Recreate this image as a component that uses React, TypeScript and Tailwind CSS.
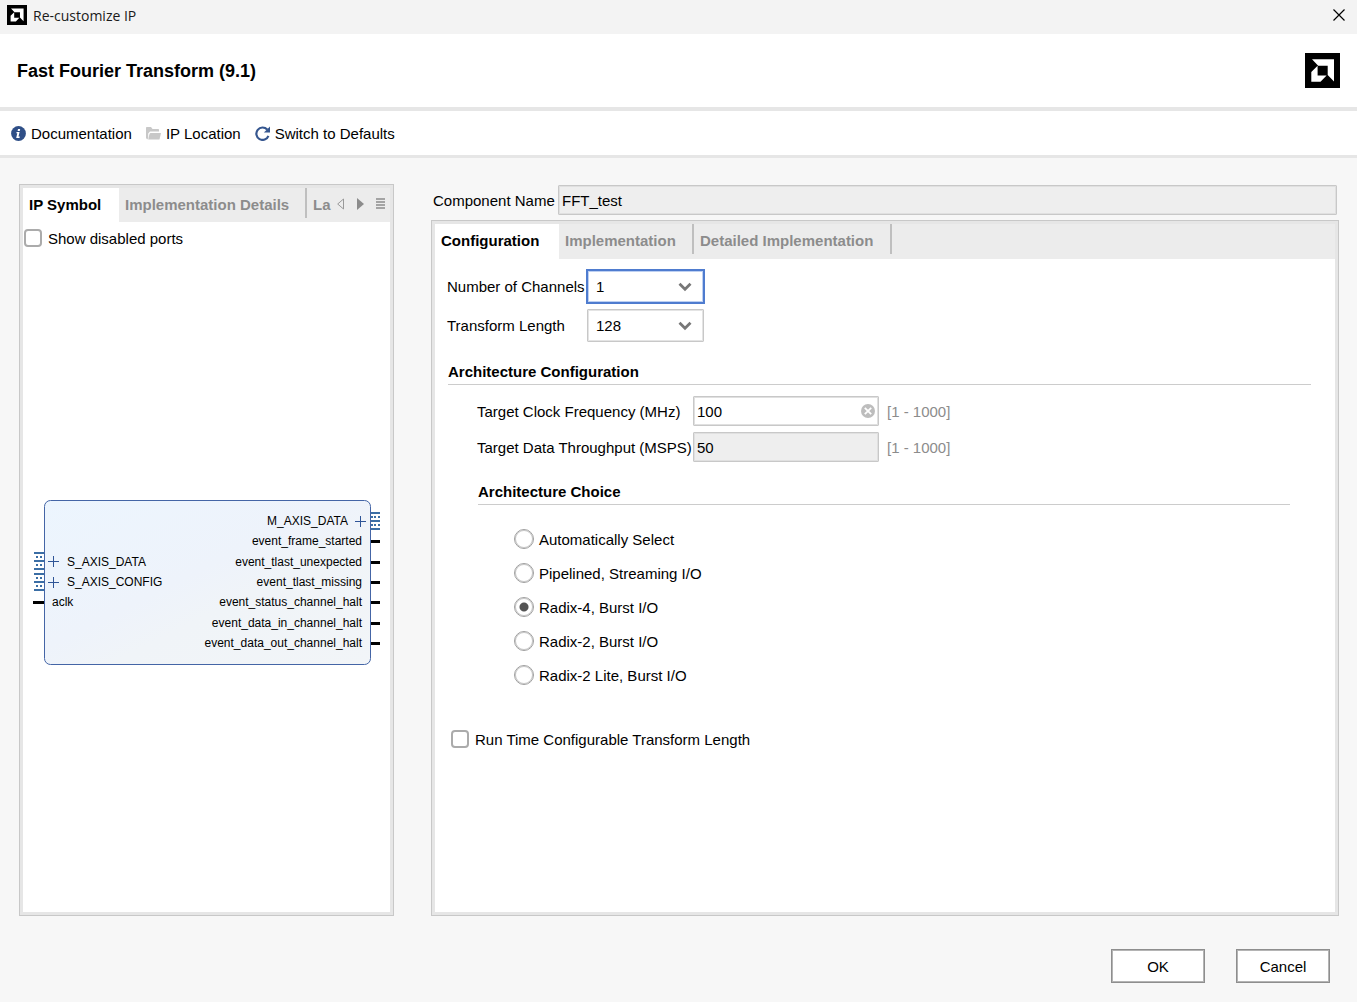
import React, { useState } from "react";

const ARCHITECTURES = [
    "Automatically Select",
    "Pipelined, Streaming I/O",
    "Radix-4, Burst I/O",
    "Radix-2, Burst I/O",
    "Radix-2 Lite, Burst I/O",
];

// Event outputs of the block, y is the top of the port stub
const EVENT_PORTS = [
    { name: "event_frame_started", y: 40 },
    { name: "event_tlast_unexpected", y: 61 },
    { name: "event_tlast_missing", y: 81 },
    { name: "event_status_channel_halt", y: 101 },
    { name: "event_data_in_channel_halt", y: 122 },
    { name: "event_data_out_channel_halt", y: 142 },
];

const Logo: React.FC<{ className: string }> = ({ className }) => (
    <svg viewBox="0 0 35 35" className={className} aria-hidden="true">
        <rect width="35" height="35" fill="#000" />
        <path d="M7 6.3H29V28.5L22.7 22V12.7H13.2Z" fill="#fff" />
        <path d="M6.3 19L12.6 12.8V22.4H21.6L15.5 28.7H6.3Z" fill="#fff" />
    </svg>
);

const BusPort: React.FC<{ x: number; y: number; width: number; dots: number[] }> = ({ x, y, width, dots }) => (
    <g fill="#3b6ea5" shapeRendering="crispEdges">
        <rect x={x} y={y} width={width} height="2" />
        <rect x={x} y={y + 8} width={width} height="2" />
        <rect x={x} y={y + 16} width={width} height="2" />
        {dots.map((dot) => (
            <g key={dot}>
                <rect x={x + dot} y={y + 4} width="2" height="2" />
                <rect x={x + dot} y={y + 12} width="2" height="2" />
            </g>
        ))}
    </g>
);

const Plus: React.FC<{ x: number; y: number }> = ({ x, y }) => (
    <path d={`M${x - 5.5} ${y}h11M${x} ${y - 5.5}v11`} stroke="#2f5597" fill="none" />
);

const IpSymbol: React.FC = () => (
    <svg
        width="348"
        height="165"
        viewBox="0 0 348 165"
        className="font-['Liberation_Sans',sans-serif] text-xs"
        fill="#000"
    >
        <defs>
            <linearGradient id="block" x1="0" y1="0" x2="1" y2="1">
                <stop offset="0" stopColor="#ecf5fe" />
                <stop offset="0.45" stopColor="#eef3fb" />
                <stop offset="0.6" stopColor="#f0f4f8" />
                <stop offset="1" stopColor="#f2f5f8" />
            </linearGradient>
        </defs>
        <rect x="11.5" y="0.5" width="326" height="164" rx="6" fill="url(#block)" stroke="#4465a6" />

        {/* Inputs */}
        <BusPort x={1} y={52} width={10} dots={[2, 6]} />
        <BusPort x={1} y={73} width={10} dots={[2, 6]} />
        <Plus x={20.5} y={61.5} />
        <Plus x={20.5} y={82.5} />
        <text x="34" y="66">S_AXIS_DATA</text>
        <text x="34" y="86">S_AXIS_CONFIG</text>
        <rect x="0" y="101" width="11" height="3" />
        <text x="19" y="106">aclk</text>

        {/* Outputs */}
        <text x="315" y="25" textAnchor="end">M_AXIS_DATA</text>
        <Plus x={327.5} y={21.5} />
        <BusPort x={338} y={12} width={9} dots={[0, 3, 7]} />
        {EVENT_PORTS.map((port) => (
            <g key={port.name}>
                <text x="329" y={port.y + 5} textAnchor="end">{port.name}</text>
                <rect x="338" y={port.y} width="9" height="3" />
            </g>
        ))}
    </svg>
);

const SectionTitle: React.FC<{ children: React.ReactNode }> = ({ children }) => (
    <h2 className="mt-[19px] ml-px border-b border-[#cccccc] pb-[2px] font-bold">{children}</h2>
);

const Tab: React.FC<{ label: string; active?: boolean; className?: string }> = ({ label, active, className }) => (
    <button
        type="button"
        role="tab"
        aria-selected={!!active}
        className={`h-full pb-px pl-1.5 text-left leading-5 font-bold whitespace-nowrap ${
            active ? "bg-white text-black" : "text-[#8c8c8c]"
        } ${className ?? ""}`}
    >
        {label}
    </button>
);

const TabDivider: React.FC = () => <span className="h-[30px] w-[2px] shrink-0 bg-[#bfbfbf]" />;

const SelectField: React.FC<{ id: string; label: string; options: string[]; focused?: boolean }> = ({
    id,
    label,
    options,
    focused,
}) => {
    const [value, setValue] = useState(options[0]);

    return (
        <div className="flex items-center">
            <label htmlFor={id} className="w-[140px]">{label}</label>
            <div className="relative">
                <select
                    id={id}
                    value={value}
                    onChange={(e) => setValue(e.target.value)}
                    className={`block h-[33px] w-[117px] appearance-none border bg-white pl-2 outline-none ${
                        focused
                            ? "border-[#4f7ccf] ring-1 ring-[#4f7ccf] inset-ring inset-ring-[#bdd0f2]"
                            : "rounded-[1px] border-[#c8c8c8] inset-ring inset-ring-[#e4e4e4]"
                    }`}
                >
                    {options.map((option) => (
                        <option key={option}>{option}</option>
                    ))}
                </select>
                <svg
                    viewBox="0 0 14 10"
                    className="pointer-events-none absolute top-3 right-3 h-[10px] w-[14px]"
                    aria-hidden="true"
                >
                    <path d="M1.5 1.8L7 7.2L12.5 1.8" fill="none" stroke="#777" strokeWidth="2.8" />
                </svg>
            </div>
        </div>
    );
};

const checkboxClass = "size-[18px] shrink-0 appearance-none rounded-[4px] border-2 border-[#ababab] bg-white checked:bg-[#555]";
const inputClass = "h-[30px] rounded-[1px] border border-[#c8c8c8] inset-ring inset-ring-[#e0e0e0] pl-[3px] outline-none";
const buttonClass = "h-[34px] w-[94px] border border-[#8e8e8e] bg-white inset-ring inset-ring-[#b4b4b4]";

export default function App() {
    const [frequency, setFrequency] = useState("100");
    const [architecture, setArchitecture] = useState("Radix-4, Burst I/O");

    return (
        <div className="flex min-h-screen flex-col bg-[#f7f7f7] font-['Liberation_Sans',Arial,sans-serif] text-[15px] leading-[21px] text-black">
            {/* Title bar */}
            <div className="flex h-[34px] items-center bg-[#f3f3f3] pr-3 pb-1 pl-[7px]">
                <Logo className="size-5" />
                <span className="ml-1.5 font-['Open_Sans',sans-serif] text-[14px] text-[#1a1a1a]">Re-customize IP</span>
                <button type="button" aria-label="Close" className="ml-auto">
                    <svg viewBox="0 0 12 12" className="size-3" aria-hidden="true">
                        <path d="M0.5 0.5L11.5 11.5M11.5 0.5L0.5 11.5" stroke="#000" strokeWidth="1.2" />
                    </svg>
                </button>
            </div>

            {/* Header */}
            <header className="flex h-[77px] items-center justify-between border-b-4 border-[#e6e6e6] bg-white px-[17px]">
                <h1 className="text-lg font-bold">Fast Fourier Transform (9.1)</h1>
                <Logo className="size-[35px]" />
            </header>

            {/* Toolbar */}
            <nav className="flex h-[47px] items-center gap-[14px] border-b-3 border-[#e6e6e6] bg-white pl-[11px]">
                <a href="#" className="flex items-center gap-[5px]">
                    <svg viewBox="0 0 15 15" className="size-[15px]" aria-hidden="true">
                        <circle cx="7.5" cy="7.5" r="7.4" fill="#2f4f87" />
                        <path d="M7 3h2.2l-.4 2H6.6ZM5.6 6H8.6L7.5 10.6H8.8L8.5 12H5.2L6.3 7.3H5.3Z" fill="#fff" />
                    </svg>
                    Documentation
                </a>
                <a href="#" className="flex items-center gap-[5px]">
                    <svg viewBox="0 0 15 13" className="h-[13px] w-[15px]" aria-hidden="true">
                        <path d="M0 .8Q0 0 .8 0H5L6.5 2H12.3Q13 2 13 2.7V4.5H4L2.2 6.5V11L1.2 12.5L0 11Z" fill="#c8c8c8" />
                        <path d="M4.6 6H15L13.6 12Q13.4 12.6 12.8 12.6H2.2L3.5 7Q3.8 6 4.6 6Z" fill="#c8c8c8" />
                    </svg>
                    IP Location
                </a>
                <a href="#" className="flex items-center gap-[5px]">
                    <svg viewBox="0 0 15 15" className="size-[15px]" aria-hidden="true">
                        <path d="M12.2 3.6A6.2 6.2 0 1 0 13.4 9.8" fill="none" stroke="#35568f" strokeWidth="2.2" />
                        <path d="M15 .5V6.6H8.9Z" fill="#35568f" />
                    </svg>
                    Switch to Defaults
                </a>
            </nav>

            <main className="flex flex-1 gap-[37px] pt-[26px] pr-[18px] pl-[19px]">
                {/* Symbol panel */}
                <section className="flex w-[375px] shrink-0 flex-col border border-[#c8c8c8]">
                    <div className="flex flex-1 flex-col border-3 border-[#e6e6e6] bg-white">
                        <div role="tablist" className="flex h-[34px] bg-[#ececec]">
                            <Tab label="IP Symbol" active className="w-24" />
                            <Tab label="Implementation Details" className="w-[186px]" />
                            <TabDivider />
                            <Tab label="La" className="w-[30px]" />
                            <div className="flex h-[31px] flex-1 items-center justify-between pr-[5px]">
                                <button type="button" aria-label="Scroll tabs left">
                                    <svg viewBox="0 0 7 12" className="h-3 w-[7px]" aria-hidden="true">
                                        <path d="M6.5 1V11L.7 6Z" fill="none" stroke="#999" />
                                    </svg>
                                </button>
                                <button type="button" aria-label="Scroll tabs right">
                                    <svg viewBox="0 0 7 12" className="h-3 w-[7px]" aria-hidden="true">
                                        <path d="M0 0V12L7 6Z" fill="#8c8c8c" />
                                    </svg>
                                </button>
                                <button type="button" aria-label="Tab list">
                                    <svg viewBox="0 0 9 11" className="h-[11px] w-[9px]" aria-hidden="true">
                                        <path d="M0 1H9M0 4H9M0 7H9M0 10H9" stroke="#8c8c8c" strokeWidth="1.6" />
                                    </svg>
                                </button>
                            </div>
                        </div>
                        <label className="flex h-8 items-center gap-1.5 pl-px">
                            <input type="checkbox" className={checkboxClass} />
                            Show disabled ports
                        </label>
                        <div className="flex flex-1 items-center justify-center pb-px">
                            <IpSymbol />
                        </div>
                    </div>
                </section>

                {/* Settings */}
                <div className="flex min-w-0 flex-1 flex-col">
                    <div className="mt-px mr-[2px] mb-[5px] flex items-center">
                        <label htmlFor="component-name" className="w-[127px] shrink-0 pl-[2px]">Component Name</label>
                        <input
                            id="component-name"
                            readOnly
                            value="FFT_test"
                            className={`${inputClass} min-w-0 flex-1 bg-[#eeeeee]`}
                        />
                    </div>

                    <section className="flex flex-1 flex-col border border-[#c8c8c8]">
                        <div className="flex-1 border-3 border-[#e6e6e6] bg-white">
                            <div role="tablist" className="flex h-[35px] bg-[#ececec]">
                                <Tab label="Configuration" active className="w-[124px]" />
                                <Tab label="Implementation" className="w-[133px]" />
                                <TabDivider />
                                <Tab label="Detailed Implementation" className="w-[196px]" />
                                <TabDivider />
                            </div>

                            <div className="pt-[11px] pr-6 pl-3">
                                <div className="flex flex-col gap-1.5">
                                    <SelectField
                                        id="channels"
                                        label="Number of Channels"
                                        options={["1", "2", "3", "4"]}
                                        focused
                                    />
                                    <SelectField
                                        id="length"
                                        label="Transform Length"
                                        options={["128", "256", "512", "1024"]}
                                    />
                                </div>

                                <SectionTitle>Architecture Configuration</SectionTitle>

                                <div className="mt-[11px] pr-[21px] pl-[30px]">
                                    <div className="flex flex-col gap-1.5">
                                        <div className="flex items-center">
                                            <label htmlFor="frequency" className="w-[216px]">Target Clock Frequency (MHz)</label>
                                            <div className="relative">
                                                <input
                                                    id="frequency"
                                                    type="text"
                                                    value={frequency}
                                                    onChange={(e) => setFrequency(e.target.value)}
                                                    className={`${inputClass} block w-[186px] bg-white`}
                                                />
                                                <button
                                                    type="button"
                                                    aria-label="Clear"
                                                    onClick={() => setFrequency("")}
                                                    className="absolute top-2 right-1"
                                                >
                                                    <svg viewBox="0 0 14 14" className="size-[14px]" aria-hidden="true">
                                                        <circle cx="7" cy="7" r="7" fill="#bdbdbd" />
                                                        <path d="M3.8 3.8L10.2 10.2M10.2 3.8L3.8 10.2" stroke="#fff" strokeWidth="1.8" />
                                                    </svg>
                                                </button>
                                            </div>
                                            <span className="ml-2 text-[#8c8c8c]">[1 - 1000]</span>
                                        </div>
                                        <div className="flex items-center">
                                            <label htmlFor="throughput" className="w-[216px]">Target Data Throughput (MSPS)</label>
                                            <input
                                                id="throughput"
                                                type="text"
                                                readOnly
                                                value="50"
                                                className={`${inputClass} w-[186px] bg-[#eeeeee]`}
                                            />
                                            <span className="ml-2 text-[#8c8c8c]">[1 - 1000]</span>
                                        </div>
                                    </div>

                                    <SectionTitle>Architecture Choice</SectionTitle>

                                    <div className="mt-[17px] flex flex-col items-start pl-[37px]">
                                        {ARCHITECTURES.map((name) => (
                                            <label key={name} className="flex h-[34px] items-center gap-[5px]">
                                                <input
                                                    type="radio"
                                                    name="architecture"
                                                    checked={architecture === name}
                                                    onChange={() => setArchitecture(name)}
                                                    className="size-5 appearance-none rounded-full border border-[#a0a0a0] bg-white bg-[radial-gradient(circle,#555_4px,white_5px)] bg-center inset-ring inset-ring-[#c8c8c8] not-checked:bg-none"
                                                />
                                                {name}
                                            </label>
                                        ))}
                                    </div>
                                </div>

                                <label className="mt-[37px] flex h-5 items-center gap-1.5 pl-1">
                                    <input type="checkbox" className={checkboxClass} />
                                    Run Time Configurable Transform Length
                                </label>
                            </div>
                        </div>
                    </section>
                </div>
            </main>

            {/* Dialog buttons */}
            <footer className="flex justify-end gap-[31px] pt-[33px] pr-[27px] pb-[19px]">
                <button type="button" className={buttonClass}>OK</button>
                <button type="button" className={buttonClass}>Cancel</button>
            </footer>
        </div>
    );
}
